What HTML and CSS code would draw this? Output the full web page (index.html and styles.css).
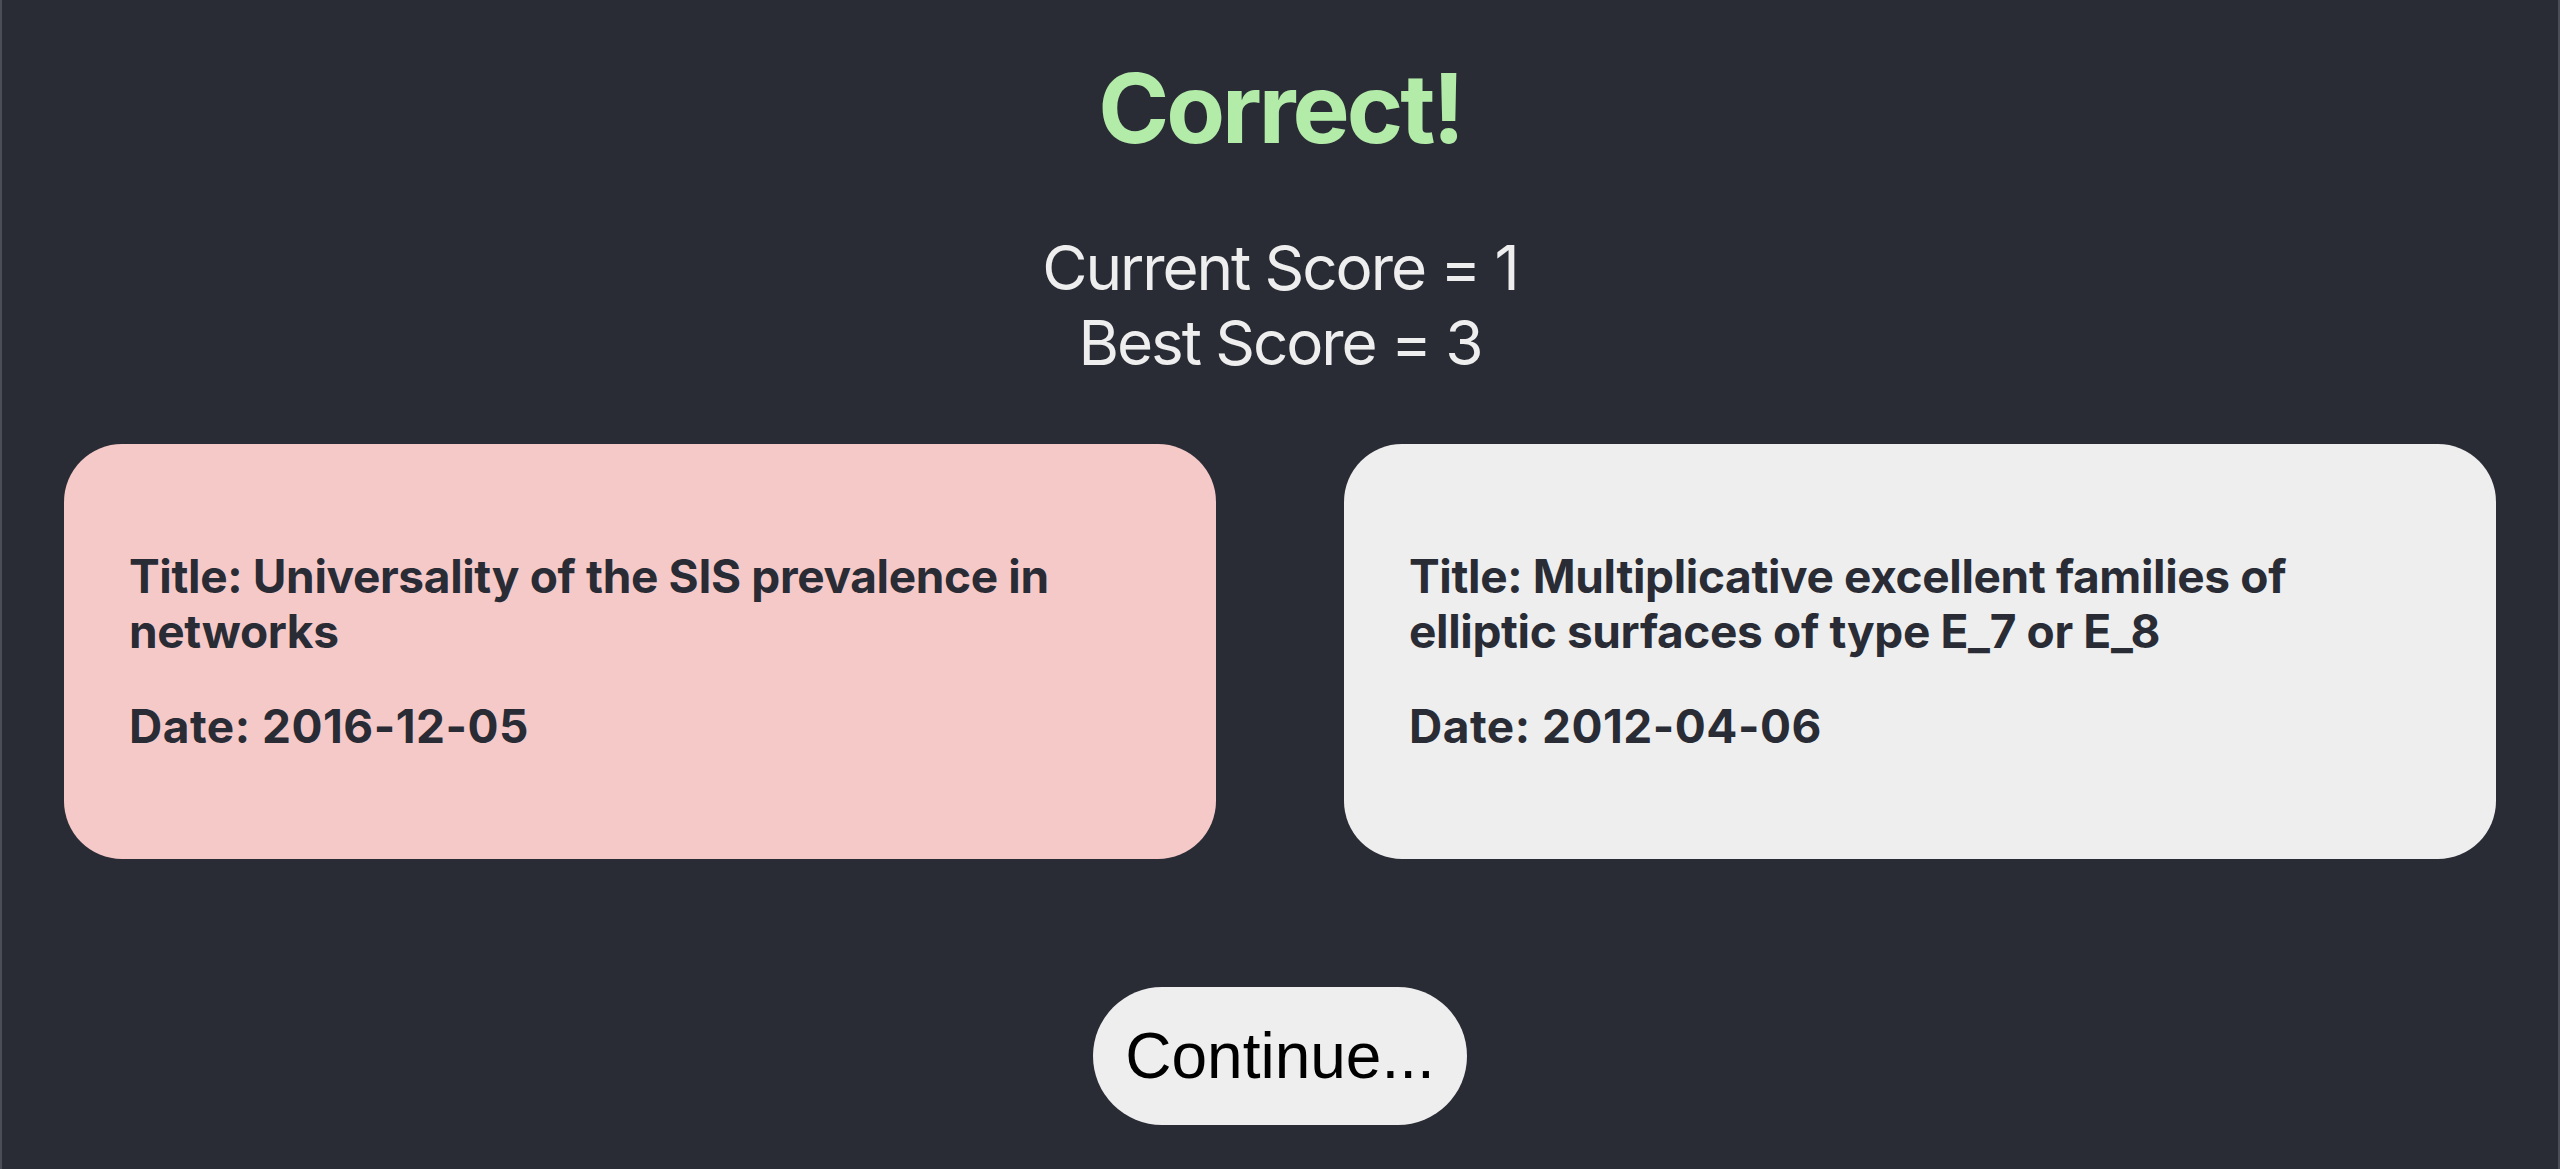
FILE: index.html
```html
<!DOCTYPE html>
<html lang="en">
<head>
<meta charset="utf-8">
<title>Correct!</title>
<link rel="stylesheet" href="styles.css">
</head>
<body>
<main class="app">
  <h1 class="verdict">Correct!</h1>
  <div class="scores">
    <div class="score-line">Current Score = 1</div>
    <div class="score-line">Best Score = 3</div>
  </div>
  <section class="cards">
    <div class="card card-wrong">
      <p class="card-text">Title: Universality of the SIS prevalence in networks</p>
      <p class="card-text card-date">Date: 2016-12-05</p>
    </div>
    <div class="card card-neutral">
      <p class="card-text">Title: Multiplicative excellent families of elliptic surfaces of type E_7 or E_8</p>
      <p class="card-text card-date">Date: 2012-04-06</p>
    </div>
  </section>
  <div class="actions">
    <button class="continue">Continue...</button>
  </div>
</main>
</body>
</html>
```
FILE: styles.css
```css
* {
  box-sizing: border-box;
}

html, body {
  margin: 0;
  padding: 0;
  background: #292c35;
}

.app {
  min-height: 100vh;
  padding-top: 50px;
  box-shadow: inset 2px 0 0 #4b4e56, inset -2px 0 0 #4b4e56;
  font-family: Inter, "Noto Sans", sans-serif;
  display: flex;
  flex-direction: column;
  align-items: center;
}

.verdict {
  margin: 0;
  font-size: 96px;
  line-height: 116px;
  font-weight: 700;
  letter-spacing: -3px;
  color: #b3eba9;
  text-align: center;
}

.scores {
  margin-top: 64px;
  text-align: center;
  color: #eeeeee;
  font-size: 62px;
  line-height: 75px;
  font-weight: 400;
  letter-spacing: -2.1px;
}

.cards {
  margin-top: 64px;
  display: flex;
  justify-content: center;
  gap: 128px;
  width: 100%;
}

.card {
  width: 1152px;
  padding: 65px 65px;
  border-radius: 58px;
  color: #292c35;
  font-weight: 700;
  font-size: 46px;
  line-height: 55px;
  letter-spacing: -0.35px;
}

.card-wrong {
  background: #f6c9c9;
}

.card-neutral {
  background: #eeeeee;
}

.card-text {
  margin: 40px 0;
}

.card-date {
  letter-spacing: 0.5px;
}

.actions {
  margin-top: 128px;
  display: flex;
  justify-content: center;
}

.continue {
  font-family: "Liberation Sans", Arial, sans-serif;
  font-size: 64px;
  padding: 32px;
  border: none;
  border-radius: 999px;
  background: #eeeeee;
  color: #000000;
  cursor: pointer;
}
```
